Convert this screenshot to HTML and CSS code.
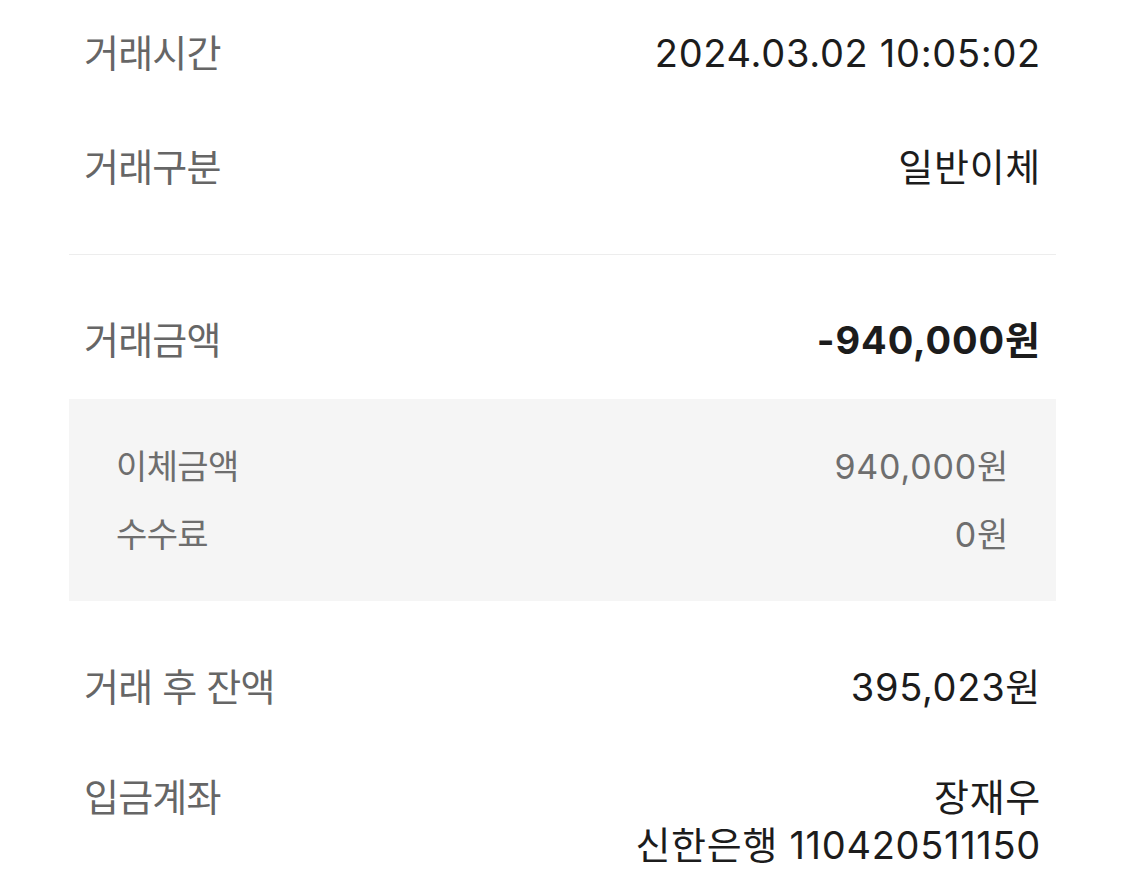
FILE: index.html
```html
<!DOCTYPE html>
<html lang="ko">
<head>
    <meta charset="utf-8">
    <title>거래상세</title>
    <link rel="stylesheet" href="styles.css">
</head>
<body>
    <div class="Detail">

        <div class="Section">
            <div class="Row">
                <div class="Label">거래시간</div>
                <div class="Value">2024.03.02 10:05:02</div>
            </div>
            <div class="Row">
                <div class="Label">거래구분</div>
                <div class="Value">일반이체</div>
            </div>
        </div>

        <div class="Row Amount">
            <div class="Label">거래금액</div>
            <div class="Value Strong">-940,000원</div>
        </div>

        <div class="Breakdown">
            <div class="SubRow">
                <div>이체금액</div>
                <div class="SubValue">940,000원</div>
            </div>
            <div class="SubRow">
                <div>수수료</div>
                <div class="SubValue">0원</div>
            </div>
        </div>

        <div class="Row Balance">
            <div class="Label">거래 후 잔액</div>
            <div class="Value">395,023원</div>
        </div>

        <div class="Row Account">
            <div class="Label">입금계좌</div>
            <div class="Value">장재우<br>신한은행 110420511150</div>
        </div>

    </div>
</body>
</html>
```

FILE: styles.css
```css
body {
    margin: 0;
    background: #ffffff;
    font-family: "Inter", "Noto Sans CJK KR", sans-serif;
}

.Detail {
    margin: 0 69px;
}

.Section {
    padding-bottom: 26px;
    border-bottom: 1px solid #ededed;
}

.Row {
    display: flex;
    justify-content: space-between;
    align-items: flex-start;
    padding: 26px 15px 34px 15px;
    font-size: 38px;
    line-height: 54px;
}

.Label {
    color: #666666;
    letter-spacing: -0.8px;
}

.Value {
    color: #1c1c1c;
    text-align: right;
    letter-spacing: 0.7px;
}

.Strong {
    font-weight: 700;
    letter-spacing: 0.9px;
}

.Amount {
    padding-top: 58px;
    padding-bottom: 32px;
}

.Breakdown {
    background: #f5f5f5;
    padding: 46px 47px 44px 47px;
}

.SubRow {
    display: flex;
    justify-content: space-between;
    font-size: 34px;
    line-height: 44px;
    color: #6e6e6e;
    letter-spacing: -0.6px;
}

.SubValue {
    letter-spacing: 0.8px;
}

.SubRow + .SubRow {
    margin-top: 24px;
}

.Balance {
    padding-top: 59px;
    padding-bottom: 29px;
}

.Account {
    padding-top: 30px;
    padding-bottom: 20px;
    line-height: 48px;
}
```
